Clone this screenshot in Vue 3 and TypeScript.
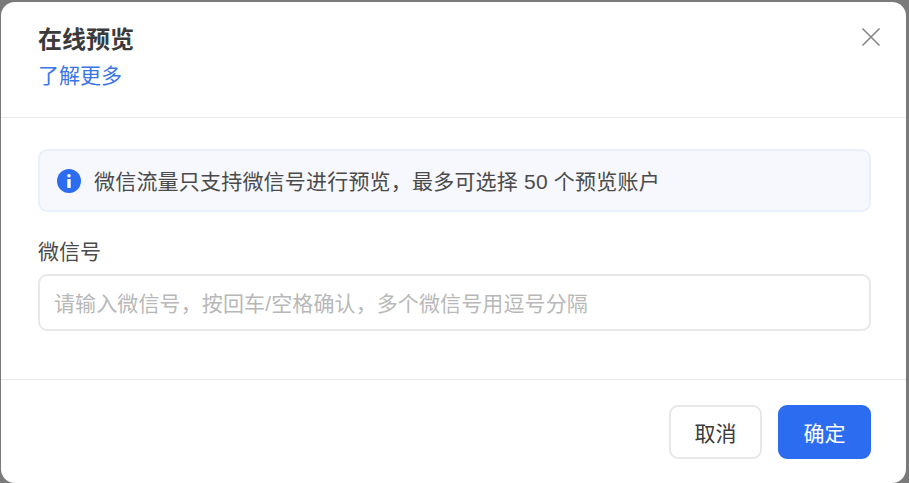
<script setup lang="ts">
const title = '在线预览'
</script>

<template>
  <div class="backdrop">
    <div class="dialog">
      <header class="head">
        <div class="titles">
          <div class="title">{{ title }}</div>
          <a class="link">了解更多</a>
        </div>
        <svg class="close" width="20" height="20" viewBox="0 0 20 20">
          <path d="M1.5 1.5 18.5 18.5M18.5 1.5 1.5 18.5" stroke="#858585" stroke-width="1.6" fill="none" />
        </svg>
      </header>
      <main class="body">
        <div class="alert">
          <svg class="info" width="24" height="24" viewBox="0 0 24 24">
            <circle cx="12" cy="12" r="12" fill="#2b6cf0" />
            <circle cx="12" cy="6.8" r="1.8" fill="#fff" />
            <rect x="10.3" y="10" width="3.4" height="9" rx="0.6" fill="#fff" />
          </svg>
          <span class="alert-text">微信流量只支持微信号进行预览，最多可选择 50 个预览账户</span>
        </div>
        <label class="label">微信号</label>
        <div class="input">请输入微信号，按回车/空格确认，多个微信号用逗号分隔</div>
      </main>
      <footer class="foot">
        <button class="btn">取消</button>
        <button class="btn primary">确定</button>
      </footer>
    </div>
  </div>
</template>

<style>
html, body { margin: 0; background: #7a7a7a; }
</style>

<style scoped>
.backdrop {
  width: 909px;
  height: 483px;
  box-sizing: border-box;
  padding: 2px 3px 0 1px;
  background: #7a7a7a;
  overflow: hidden;
  font-family: "Liberation Sans", "Noto Sans CJK SC", sans-serif;
}
.dialog {
  height: 481px;
  background: #fff;
  border-radius: 14px;
  display: flex;
  flex-direction: column;
  box-sizing: border-box;
}
.head {
  height: 116px;
  flex: none;
  box-sizing: border-box;
  padding: 21px 25px 0 37px;
  display: flex;
  justify-content: space-between;
  align-items: flex-start;
  border-bottom: 1px solid #ebebeb;
}
.title {
  font-size: 24px;
  line-height: 34px;
  font-weight: 600;
  color: #3a3a3a;
}
.link {
  display: block;
  margin-top: 4px;
  font-size: 21px;
  line-height: 30px;
  color: #3a75e6;
}
.close { margin-top: 4px; }
.body {
  flex: 1;
  padding: 31px 35px 0 37px;
}
.alert {
  height: 63px;
  box-sizing: border-box;
  border: 2px solid #e9effb;
  border-radius: 9px;
  background: #f6f8fd;
  display: flex;
  align-items: center;
  padding-left: 17px;
  gap: 13px;
  font-size: 21px;
  color: #4a4a4a;
}
.alert-text {
  letter-spacing: 0.2px;
  padding-bottom: 2px;
}
.label {
  display: block;
  margin-top: 25px;
  font-size: 21px;
  line-height: 30px;
  color: #4a4a4a;
}
.input {
  margin-top: 7px;
  height: 57px;
  box-sizing: border-box;
  border: 2px solid #e8e8e8;
  border-radius: 9px;
  padding-left: 14px;
  padding-bottom: 2px;
  display: flex;
  align-items: center;
  font-size: 21px;
  letter-spacing: 0.12px;
  color: #b8b8b8;
}
.foot {
  height: 104px;
  flex: none;
  box-sizing: border-box;
  border-top: 1px solid #e8e8e8;
  padding: 25px 35px 0 0;
  display: flex;
  justify-content: flex-end;
  gap: 16px;
}
.btn {
  width: 93px;
  height: 54px;
  box-sizing: border-box;
  border: 2px solid #e8e8e8;
  border-radius: 9px;
  background: #fff;
  color: #3a3a3a;
  font-size: 21px;
  font-family: inherit;
  padding: 0;
}
.btn.primary {
  background: #2b6cf0;
  border-color: #2b6cf0;
  color: #fff;
}
</style>
